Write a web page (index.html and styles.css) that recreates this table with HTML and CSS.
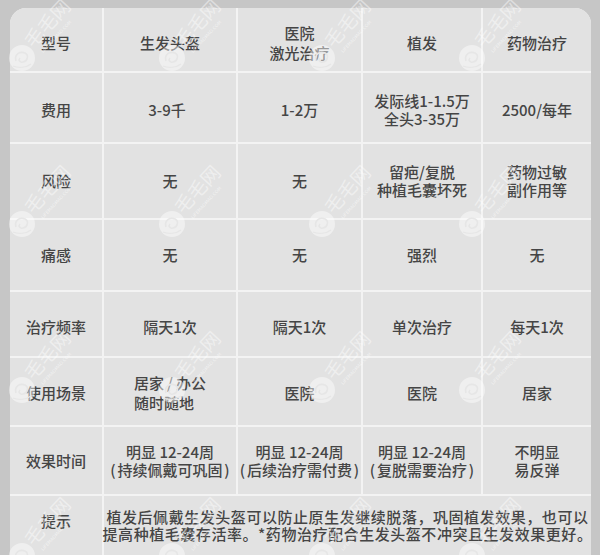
FILE: index.html
```html
<!DOCTYPE html>
<html lang="zh">
<head>
<meta charset="utf-8">
<link rel="stylesheet" href="styles.css">
</head>
<body>
<div class="page">
  <div class="panel">
    <div class="cell r1 head">型号</div>
    <div class="cell r1">生发头盔</div>
    <div class="cell r1 tall">医院<br>激光治疗</div>
    <div class="cell r1">植发</div>
    <div class="cell r1">药物治疗</div>

    <div class="cell r2 head">费用</div>
    <div class="cell r2 shift">3-9千</div>
    <div class="cell r2">1-2万</div>
    <div class="cell r2">发际线1-1.5万<br>全头3-35万</div>
    <div class="cell r2">2500/每年</div>

    <div class="cell head">风险</div>
    <div class="cell">无</div>
    <div class="cell">无</div>
    <div class="cell">留疤/复脱<br>种植毛囊坏死</div>
    <div class="cell">药物过敏<br>副作用等</div>

    <div class="cell head">痛感</div>
    <div class="cell">无</div>
    <div class="cell">无</div>
    <div class="cell">强烈</div>
    <div class="cell">无</div>

    <div class="cell r5 head">治疗频率</div>
    <div class="cell r5">隔天1次</div>
    <div class="cell r5">隔天1次</div>
    <div class="cell r5">单次治疗</div>
    <div class="cell r5">每天1次</div>

    <div class="cell r6 head">使用场景</div>
    <div class="cell r6 tall left"><div>居家<span class="sl">/</span>办公<br>随时随地</div></div>
    <div class="cell r6">医院</div>
    <div class="cell r6">医院</div>
    <div class="cell r6">居家</div>

    <div class="cell head">效果时间</div>
    <div class="cell nowrap"><div>明显 12-24周<br><span class="par">(</span>持续佩戴可巩固<span class="par">)</span></div></div>
    <div class="cell nowrap"><div>明显 12-24周<br><span class="par">(</span>后续治疗需付费<span class="par">)</span></div></div>
    <div class="cell nowrap"><div>明显 12-24周<br><span class="par">(</span>复脱需要治疗<span class="par">)</span></div></div>
    <div class="cell">不明显<br>易反弹</div>

    <div class="cell head tip-label">提示</div>
    <div class="cell tip">植发后佩戴生发头盔可以防止原生发继续脱落，巩固植发效果，也可以<br>提高种植毛囊存活率。*药物治疗配合生发头盔不冲突且生发效果更好。</div>
  </div>

  <svg class="watermarks" width="600" height="555" viewBox="0 0 600 555" aria-hidden="true">
    <defs>
      <g id="wm">
        <circle cx="0" cy="0" r="13" fill="#ffffff" fill-opacity="0.45"/>
        <path d="M-6 3 C-8 -4 -2 -7 3 -5 C7 -3 6 3 1 4 C-2 5 -4 2 -2 0" fill="none" stroke="#e6e6e6" stroke-width="1.6"/>
        <path d="M-9 8 C-4 10 4 10 9 6" fill="none" stroke="#e6e6e6" stroke-width="1.2"/>
        <text x="11" y="-9" transform="rotate(-47 11 -9)" font-family="Noto Sans CJK SC, sans-serif" font-size="19" fill="#ffffff" fill-opacity="0.45">毛毛网</text>
        <text x="21" y="-5" transform="rotate(-47 21 -5)" font-family="DejaVu Sans, sans-serif" font-size="4.5" fill="#ffffff" fill-opacity="0.55">LIFEMAOMAO.COM</text>
      </g>
    </defs>
    <use href="#wm" x="22" y="58"/><use href="#wm" x="172" y="58"/><use href="#wm" x="322" y="58"/><use href="#wm" x="472" y="58"/>
    <use href="#wm" x="22" y="224"/><use href="#wm" x="172" y="224"/><use href="#wm" x="322" y="224"/><use href="#wm" x="472" y="224"/>
    <use href="#wm" x="22" y="390"/><use href="#wm" x="172" y="390"/><use href="#wm" x="322" y="390"/><use href="#wm" x="472" y="390"/>
    <use href="#wm" x="22" y="556"/><use href="#wm" x="172" y="556"/><use href="#wm" x="322" y="556"/><use href="#wm" x="472" y="556"/>
  </svg>
</div>
</body>
</html>
```

FILE: styles.css
```css
html, body {
  margin: 0;
  padding: 0;
  background: #c6c6c6;
  width: 600px;
  height: 555px;
  overflow: hidden;
}

.page {
  position: relative;
  width: 600px;
  height: 555px;
  padding: 8px 0 0 10px;
  box-sizing: border-box;
}

.panel {
  display: grid;
  grid-template-columns: 92px 132px 123px 118px 108px;
  grid-template-rows: 63px 69px 74px 70px 64px 67px 67px 80px;
  gap: 2px;
  width: 581px;
  background: #f3f3f3;
  border-radius: 16px 16px 0 0;
  overflow: hidden;
  font-family: "Noto Sans CJK SC", "Noto Sans", sans-serif;
  font-size: 15px;
  font-weight: 500;
  line-height: 18px;
  color: #454545;
}

.cell {
  background: #e2e2e2;
  display: flex;
  align-items: center;
  justify-content: center;
  text-align: center;
  box-sizing: border-box;
}

.r1 { padding-top: 7px; }
.r2 { padding-top: 5px; }
.r5 { padding-top: 5px; }
.r6 { padding-top: 2px; }
.shift { padding-right: 6px; }
.tall { line-height: 20px; }
.left { text-align: left; }

.sl {
  display: inline-block;
  width: 12px;
  text-align: center;
}

.nowrap {
  white-space: nowrap;
  overflow: visible;
}

.par {
  display: inline-block;
  width: 9px;
  text-align: center;
}

.tip-label {
  align-items: flex-start;
  padding-top: 16px;
}

.tip {
  grid-column: 2 / 6;
  align-items: flex-start;
  padding-top: 12px;
  line-height: 17px;
  letter-spacing: 0.55px;
  white-space: nowrap;
}

.watermarks {
  position: absolute;
  left: 0;
  top: 0;
  pointer-events: none;
}
```
